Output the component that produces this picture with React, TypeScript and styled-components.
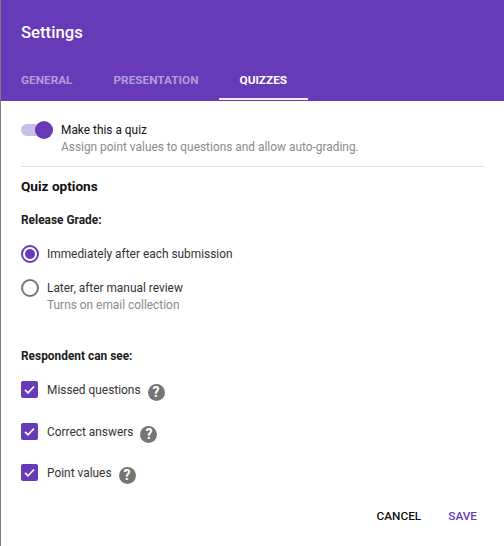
import React from 'react';
import styled, { createGlobalStyle } from 'styled-components';

const GlobalStyle = createGlobalStyle`
  html, body {
    margin: 0;
    padding: 0;
    background: #fff;
    font-family: Roboto, "Liberation Sans", sans-serif;
  }
`;

const Dialog = styled.div`
  width: 504px;
  height: 546px;
  box-sizing: border-box;
  border-left: 1px solid #7d7d7d;
  background: #fff;
  display: flex;
  flex-direction: column;
  overflow: hidden;
`;

const Header = styled.header`
  height: 101px;
  flex: none;
  box-sizing: border-box;
  margin-left: -1px;
  padding: 23px 0 0 21px;
  background: #673ab7;
  display: flex;
  flex-direction: column;
  justify-content: space-between;
`;

const Title = styled.h1`
  margin: 0;
  color: #fff;
  font-size: 16.7px;
  line-height: 20px;
  font-weight: 500;
`;

const Tabs = styled.nav`
  display: flex;
  margin-left: -20.5px;
  margin-bottom: 1px;
`;

const Tab = styled.div<{ $active?: boolean }>`
  height: 38px;
  box-sizing: border-box;
  padding: 8px 20.5px 0;
  font-size: 11.8px;
  line-height: 20px;
  font-weight: 700;
  color: ${p => (p.$active ? '#fff' : '#b39ddb')};
  border-bottom: 2px solid ${p => (p.$active ? '#f1edf8' : 'transparent')};
`;

const Body = styled.main`
  flex: 1;
  padding: 20px 20px 0;
  display: flex;
  flex-direction: column;
`;

const ToggleRow = styled.section`
  display: flex;
  gap: 8px;
  height: 45px;
  border-bottom: 1px solid #e0e0e0;
`;

const Switch = styled.div`
  position: relative;
  width: 32px;
  height: 12px;
  margin-top: 3px;
  border-radius: 6px;
  background: #c9bee5;
`;

const Knob = styled.span`
  position: absolute;
  right: 0;
  top: -3px;
  width: 18px;
  height: 18px;
  border-radius: 50%;
  background: #673ab7;
`;

const MainLabel = styled.div`
  font-size: 11.9px;
  line-height: 18px;
  color: #111;
`;

const Hint = styled.div`
  font-size: 11.9px;
  line-height: 17px;
  color: #8a8a8a;
`;

const Heading = styled.h2`
  margin: 10px 0 0;
  font-size: 13.6px;
  line-height: 18px;
  font-weight: 700;
  color: #111;
`;

const SubHeading = styled.h3<{ $top: number }>`
  margin: ${p => p.$top}px 0 0;
  font-size: 11.9px;
  line-height: 16px;
  font-weight: 700;
  color: #1c1c1c;
`;

const RadioRow = styled.div<{ $top: number }>`
  display: flex;
  gap: 8px;
  margin-top: ${p => p.$top}px;
`;

const Radio = styled.span<{ $checked?: boolean }>`
  flex: none;
  width: 18px;
  height: 18px;
  border-radius: 50%;
  box-sizing: border-box;
  border: 2px solid ${p => (p.$checked ? '#673ab7' : '#757575')};
  display: flex;
  align-items: center;
  justify-content: center;
  &::after {
    content: '';
    display: ${p => (p.$checked ? 'block' : 'none')};
    width: 10px;
    height: 10px;
    border-radius: 50%;
    background: #673ab7;
  }
`;

const OptionLabel = styled.div`
  font-size: 11.9px;
  line-height: 18px;
  color: #333;
`;

const CheckRow = styled.div`
  display: flex;
  align-items: flex-start;
  height: 20px;
  margin-top: 21.7px;
  &:first-of-type {
    margin-top: 17px;
  }
`;

const CheckBox = styled.span`
  flex: none;
  width: 17px;
  height: 17px;
  border-radius: 2px;
  background: #673ab7;
  margin-right: 9px;
  display: flex;
  align-items: center;
  justify-content: center;
`;

const HelpBadge = styled.span`
  flex: none;
  width: 17px;
  height: 17px;
  margin: 3px 0 0 7px;
  border-radius: 50%;
  background: #757575;
  color: #fff;
  font-size: 14px;
  line-height: 17px;
  font-weight: 700;
  text-align: center;
`;

const Checks = styled.div`
  display: flex;
  flex-direction: column;
`;

const Footer = styled.footer`
  display: flex;
  justify-content: flex-end;
  gap: 27px;
  margin-top: 24px;
  padding-right: 7px;
`;

const ActionButton = styled.div<{ $primary?: boolean }>`
  font-size: 11.8px;
  line-height: 16px;
  font-weight: 500;
  color: ${p => (p.$primary ? '#673ab7' : '#111')};
`;

const checks = ['Missed questions', 'Correct answers', 'Point values'];

function Tick() {
  return (
    <svg width="13" height="13" viewBox="0 0 13 13" fill="none">
      <path d="M2 6.8l3 3 6-6.3" stroke="#fff" strokeWidth="1.7" />
    </svg>
  );
}

function App() {
  return (
    <Dialog>
      <GlobalStyle />
      <Header>
        <Title>Settings</Title>
        <Tabs>
          <Tab>GENERAL</Tab>
          <Tab>PRESENTATION</Tab>
          <Tab $active>QUIZZES</Tab>
        </Tabs>
      </Header>
      <Body>
        <ToggleRow>
          <Switch>
            <Knob />
          </Switch>
          <div>
            <MainLabel>Make this a quiz</MainLabel>
            <Hint>Assign point values to questions and allow auto-grading.</Hint>
          </div>
        </ToggleRow>
        <Heading>Quiz options</Heading>
        <SubHeading $top={17}>Release Grade:</SubHeading>
        <RadioRow $top={17}>
          <Radio $checked />
          <OptionLabel>Immediately after each submission</OptionLabel>
        </RadioRow>
        <RadioRow $top={16}>
          <Radio />
          <div>
            <OptionLabel>Later, after manual review</OptionLabel>
            <Hint>Turns on email collection</Hint>
          </div>
        </RadioRow>
        <SubHeading $top={34}>Respondent can see:</SubHeading>
        <Checks>
          {checks.map(label => (
            <CheckRow key={label}>
              <CheckBox>
                <Tick />
              </CheckBox>
              <OptionLabel>{label}</OptionLabel>
              <HelpBadge>?</HelpBadge>
            </CheckRow>
          ))}
        </Checks>
        <Footer>
          <ActionButton>CANCEL</ActionButton>
          <ActionButton $primary>SAVE</ActionButton>
        </Footer>
      </Body>
    </Dialog>
  );
}

export default App;
